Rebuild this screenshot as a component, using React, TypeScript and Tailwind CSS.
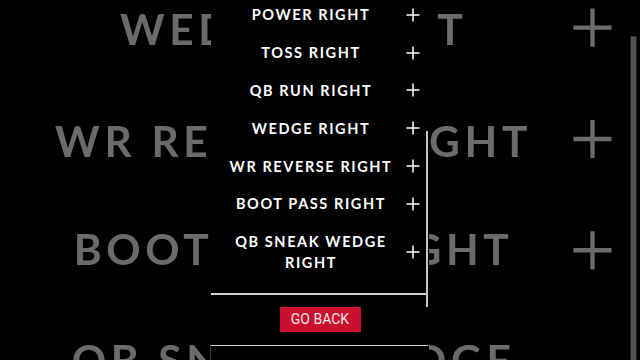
import React from "react";

const rows = [
  "POWER RIGHT",
  "TOSS RIGHT",
  "QB RUN RIGHT",
  "WEDGE RIGHT",
  "WR REVERSE RIGHT",
  "BOOT PASS RIGHT",
  "QB SNEAK WEDGE RIGHT",
];

function Plus() {
  return (
    <svg width="14" height="14" viewBox="0 0 14 14" className="block">
      <path d="M7 0.5V13.5M0.5 7H13.5" stroke="currentColor" strokeWidth="1.5" fill="none" />
    </svg>
  );
}

function Panel() {
  return (
    <div className="relative w-[218px] h-[360px] overflow-hidden">
      <div className="-mt-[4px]">
        {rows.map((r) => (
          <div key={r} className="flex items-center py-[8.4px] pl-[9px]">
            <div className="w-[182px] text-center leading-[21px] text-[14.5px] font-bold tracking-[0.11em] text-white [font-family:Lato,'Open_Sans',sans-serif]">
              {r}
            </div>
            <div className="ml-[4px] text-white">
              <Plus />
            </div>
          </div>
        ))}
      </div>
      <div className="mt-[12px] h-[1.5px] w-[217px] bg-[#d0d0d0]" />
      <div className="flex justify-center pt-[12px] pb-[13px]">
        <div className="w-[81px] h-[25px] flex items-center justify-center bg-[#c8102e] text-[#f3e6e8] text-[14px] leading-none [font-family:Roboto,'Liberation_Sans',sans-serif]">
          GO BACK
        </div>
      </div>
      <div className="h-[1.5px] w-[217px] bg-[#d0d0d0]" />
      <div className="absolute left-[215px] top-[131px] w-[1.5px] h-[176px] bg-[#c4c4c4]" />
    </div>
  );
}

export default function App() {
  return (
    <div className="relative w-[640px] h-[360px] bg-black overflow-hidden">
      <div className="absolute inset-0 flex items-center justify-center opacity-[0.42] blur-[0.6px]">
        <div className="scale-[2.93]">
          <Panel />
        </div>
      </div>
      <div className="absolute inset-0 flex justify-center">
        <div className="bg-black">
          <Panel />
        </div>
      </div>
    </div>
  );
}
